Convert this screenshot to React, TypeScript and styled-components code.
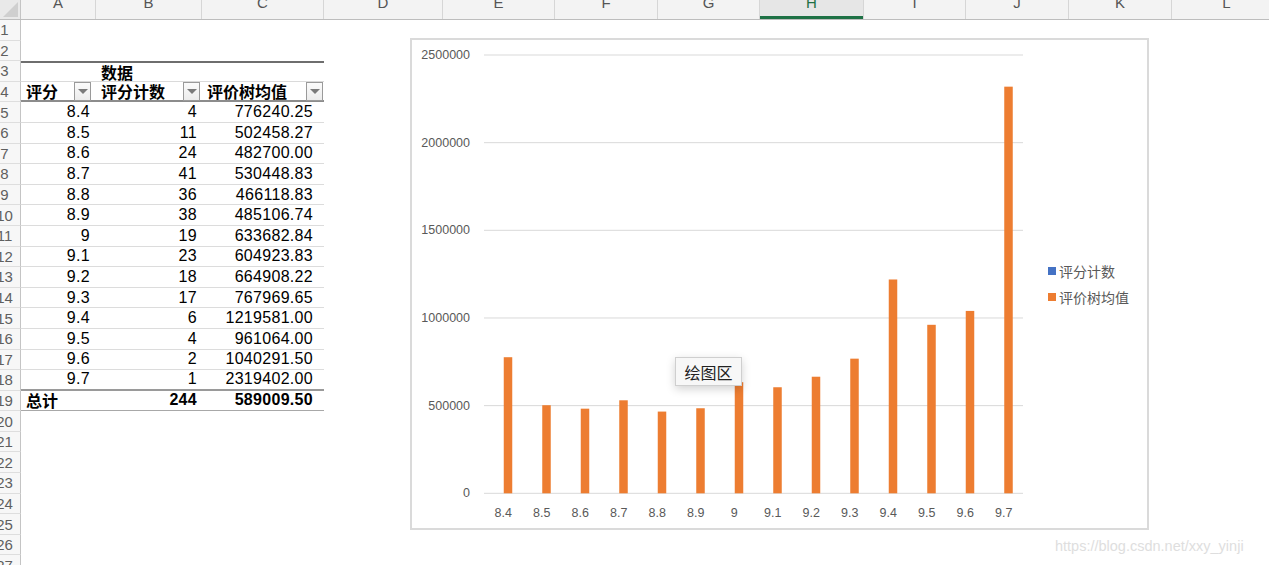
import React from "react";
import styled, { createGlobalStyle } from "styled-components";

const GlobalStyle = createGlobalStyle`
  * { box-sizing: border-box; }
  html, body { margin: 0; padding: 0; background: #fff; overflow: hidden; }
  body { width: 1269px; height: 565px; }
`;

const FONT = `"Liberation Sans", Arial, "Noto Sans CJK SC", sans-serif`;
const CJK = `"Liberation Sans", "Noto Sans CJK SC", sans-serif`;

const COLS = [
  { key: "A", w: 75 },
  { key: "B", w: 106 },
  { key: "C", w: 122 },
  { key: "D", w: 119 },
  { key: "E", w: 112 },
  { key: "F", w: 103 },
  { key: "G", w: 102 },
  { key: "H", w: 104, active: true },
  { key: "I", w: 102 },
  { key: "J", w: 103 },
  { key: "K", w: 103 },
  { key: "L", w: 110 },
];

const rows = [
  ["8.4", "4", "776240.25"],
  ["8.5", "11", "502458.27"],
  ["8.6", "24", "482700.00"],
  ["8.7", "41", "530448.83"],
  ["8.8", "36", "466118.83"],
  ["8.9", "38", "485106.74"],
  ["9", "19", "633682.84"],
  ["9.1", "23", "604923.83"],
  ["9.2", "18", "664908.22"],
  ["9.3", "17", "767969.65"],
  ["9.4", "6", "1219581.00"],
  ["9.5", "4", "961064.00"],
  ["9.6", "2", "1040291.50"],
  ["9.7", "1", "2319402.00"],
];

type Edge = "none" | "top" | "head" | "data" | "total";

function App() {
  const bodyRows: { n: number; edge: Edge; content?: React.ReactNode }[] = [];
  for (let n = 1; n <= 27; n++) {
    let edge: Edge = "none";
    let content: React.ReactNode = null;
    if (n === 3) {
      edge = "top";
      content = (
        <>
          <Cell $w={75} />
          <HeadCell $w={106}>数据</HeadCell>
          <Cell $w={122} />
        </>
      );
    } else if (n === 4) {
      edge = "head";
      content = (
        <>
          <HeadCell $w={75}>
            评分<Filter $mr={5} />
          </HeadCell>
          <HeadCell $w={106}>
            评分计数<Filter $mr={2} />
          </HeadCell>
          <HeadCell $w={122}>
            评价树均值<Filter $mr={1} />
          </HeadCell>
        </>
      );
    } else if (n >= 5 && n <= 18) {
      const r = rows[n - 5];
      edge = n === 18 ? "total" : "data";
      content = (
        <>
          <NumCell $w={75} $pr={6}>{r[0]}</NumCell>
          <NumCell $w={106} $pr={5}>{r[1]}</NumCell>
          <NumCell $w={122} $pr={11}>{r[2]}</NumCell>
        </>
      );
    } else if (n === 19) {
      content = (
        <>
          <HeadCell $w={75}>总计</HeadCell>
          <NumCell $w={106} $pr={5} $bold>244</NumCell>
          <NumCell $w={122} $pr={11} $bold>589009.50</NumCell>
        </>
      );
    }
    bodyRows.push({ n, edge, content });
  }

  return (
    <>
      <GlobalStyle />
      <Sheet>
        <HeaderRow>
          <Corner />
          {COLS.map((c) => (
            <ColHead key={c.key} $w={c.w} $active={!!c.active}>
              <span>{c.key}</span>
            </ColHead>
          ))}
        </HeaderRow>
        {bodyRows.map((r) => (
          <Row key={r.n}>
            <RowHead>
              <span>{r.n}</span>
            </RowHead>
            <TableBand $edge={r.edge} $total={r.n === 19}>
              {r.content}
            </TableBand>
          </Row>
        ))}

        <ChartFrame>
          <Plot />
          <Legend>
            <LegendItem>
              <Swatch $c="#4472c4" />
              评分计数
            </LegendItem>
            <LegendItem>
              <Swatch $c="#ed7d31" />
              评价树均值
            </LegendItem>
          </Legend>
        </ChartFrame>

        <Tip>绘图区</Tip>
        <Watermark>https://blog.csdn.net/xxy_yinji</Watermark>
      </Sheet>
    </>
  );
}

export default App;

const values = rows.map((r) => parseFloat(r[2]));

function Plot() {
  const left = 484;
  const right = 1023;
  const top = 55;
  const bottom = 493.3;
  const step = (bottom - top) / 5;
  const cat = (right - left) / values.length;
  const ticks = [2500000, 2000000, 1500000, 1000000, 500000, 0];
  return (
    <PlotSvg width={628} height={488} viewBox="412 40 628 488">
      {ticks.map((t, i) => (
        <g key={t}>
          <line x1={left} x2={right} y1={top + step * i} y2={top + step * i} stroke="#d9d9d9" strokeWidth={1} />
          <text x={470} y={top + step * i} textAnchor="end" dominantBaseline="central">
            {t}
          </text>
        </g>
      ))}
      {values.map((v, i) => {
        const cx = left + cat * (i + 0.5);
        const h = (v / 2500000) * (bottom - top);
        return (
          <g key={i}>
            <rect x={cx + 0.5} y={bottom - h} width={8.5} height={h} fill="#ed7d31" />
            <text x={cx} y={513} textAnchor="middle" dominantBaseline="central">
              {rows[i][0]}
            </text>
          </g>
        );
      })}
    </PlotSvg>
  );
}

const Sheet = styled.div`
  position: relative;
  width: 1269px;
  height: 565px;
  overflow: hidden;
  font-family: ${FONT};
`;

const HeaderRow = styled.div`
  display: flex;
  height: 20px;
  background: #f3f3f3;
  border-bottom: 1px solid #bdbdbd;
`;

const Corner = styled.div`
  width: 21px;
  flex: none;
  position: relative;
  background: #e9e9e9;
  border-right: 1px solid #c4c4c4;
  &::after {
    content: "";
    position: absolute;
    right: 2px;
    bottom: 2px;
    border-style: solid;
    border-width: 0 0 15px 15px;
    border-color: transparent transparent #cfcfcf transparent;
  }
`;

const ColHead = styled.div<{ $w: number; $active: boolean }>`
  width: ${(p) => p.$w}px;
  flex: none;
  display: flex;
  justify-content: center;
  border-right: 1px solid #d6d6d6;
  background: ${(p) => (p.$active ? "#e6e6e6" : "transparent")};
  box-shadow: ${(p) => (p.$active ? "inset 0 -3px 0 #1e7145" : "none")};
  color: ${(p) => (p.$active ? "#1e7145" : "#555")};
  font-size: 15px;
  line-height: 15px;
  overflow: hidden;
  span {
    margin-top: -5px;
  }
`;

const Row = styled.div`
  display: flex;
  height: 20.6px;
`;

const RowHead = styled.div`
  width: 21px;
  flex: none;
  overflow: hidden;
  display: flex;
  align-items: center;
  background: #f7f7f7;
  border-right: 1px solid #c4c4c4;
  border-bottom: 1px solid #dedede;
  color: #5f5f5f;
  font-size: 15px;
  span {
    flex: none;
    width: 35px;
    margin-left: -13px;
    text-align: center;
    white-space: nowrap;
  }
`;

const edgeStyle: Record<Edge, string> = {
  none: "",
  top: "border-top: 2px solid #6e6e6e; border-bottom: 1px solid #dadada;",
  head: "border-bottom: 2px solid #8c8c8c;",
  data: "border-bottom: 1px solid #dcdcdc;",
  total: "border-bottom: 2px solid #9a9a9a;",
};

const TableBand = styled.div<{ $edge: Edge; $total: boolean }>`
  display: flex;
  width: 303px;
  flex: none;
  ${(p) => edgeStyle[p.$edge]}
  ${(p) => (p.$total ? "border-bottom: 1px solid #a8a8a8;" : "")}
`;

const Cell = styled.div<{ $w: number }>`
  width: ${(p) => p.$w}px;
  flex: none;
`;

const HeadCell = styled(Cell)`
  display: flex;
  align-items: center;
  padding-left: 5px;
  font-family: ${CJK};
  font-weight: 700;
  font-size: 16px;
  color: #000;
  white-space: nowrap;
`;

const NumCell = styled(Cell)<{ $pr: number; $bold?: boolean }>`
  display: flex;
  align-items: center;
  justify-content: flex-end;
  padding-right: ${(p) => p.$pr}px;
  font-size: 16px;
  letter-spacing: 0.3px;
  font-weight: ${(p) => (p.$bold ? 700 : 400)};
  color: #000;
`;

const Filter = styled.span<{ $mr: number }>`
  margin-left: auto;
  margin-right: ${(p) => p.$mr}px;
  width: 17px;
  height: 19px;
  flex: none;
  border: 1px solid #9a9a9a;
  background: linear-gradient(#fbfbfb, #ececec);
  display: flex;
  align-items: center;
  justify-content: center;
  &::after {
    content: "";
    border-style: solid;
    border-width: 5px 5px 0 5px;
    border-color: #7a7a7a transparent transparent transparent;
  }
`;

const ChartFrame = styled.div`
  position: absolute;
  left: 410px;
  top: 38px;
  width: 739px;
  height: 492px;
  border: 2px solid #dadada;
  background: #fff;
  display: flex;
  align-items: center;
`;

const PlotSvg = styled.svg`
  flex: none;
  display: block;
  text {
    font-family: ${FONT};
    font-size: 12.5px;
    fill: #595959;
  }
`;

const Legend = styled.div`
  display: flex;
  flex-direction: column;
  padding-left: 8px;
`;

const LegendItem = styled.div`
  display: flex;
  align-items: center;
  height: 26px;
  font-family: ${CJK};
  font-size: 14px;
  color: #595959;
`;

const Swatch = styled.span<{ $c: string }>`
  width: 8px;
  height: 8px;
  background: ${(p) => p.$c};
  margin-right: 3px;
`;

const Tip = styled.div`
  position: absolute;
  left: 675px;
  top: 357px;
  width: 67px;
  height: 29px;
  display: flex;
  align-items: center;
  justify-content: center;
  background: #f7f7f7;
  border: 1px solid #cfcfcf;
  box-shadow: 0 3px 10px rgba(0, 0, 0, 0.18);
  font-family: "Noto Sans CJK SC", sans-serif;
  font-size: 16px;
  color: #222;
`;

const Watermark = styled.div`
  position: absolute;
  left: 1055px;
  top: 538px;
  font-family: ${FONT};
  font-size: 14.5px;
  color: #dedede;
  white-space: nowrap;
`;
